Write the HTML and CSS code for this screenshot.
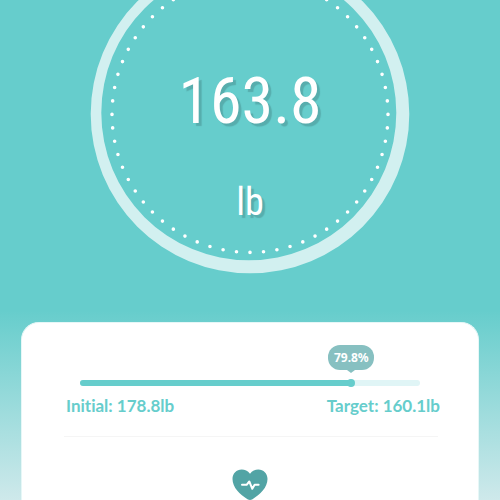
FILE: index.html
```
<!DOCTYPE html>
<html lang="en">
<head>
<meta charset="utf-8">
<meta name="viewport" content="width=device-width, initial-scale=1">
<title>Weight</title>
<link rel="stylesheet" href="styles.css">
</head>
<body>
<main class="page">
  <section class="dial" aria-label="Current weight">
    <svg class="dial-ring" viewBox="0 0 320 320" aria-hidden="true">
      <path fill="#d2f0f0" fill-rule="evenodd" d="M.7 160a159.3 159.3 0 1 0 318.6 0a159.3 159.3 0 1 0-318.6 0zM11.3 158.8a147.5 147.5 0 1 0 295 0a147.5 147.5 0 1 0-295 0z"/>
      <circle cx="160" cy="160.400" r="138" fill="none" stroke="#fff" stroke-width="3.6" stroke-linecap="round" stroke-dasharray="0 1" pathLength="64"/>
    </svg>
    <p class="reading"><span class="value">163.8</span><span class="unit">lb</span></p>
  </section>
  <section class="card">
    <div class="goal">
      <div class="track" role="progressbar" aria-label="Goal progress" aria-valuenow="79.8" aria-valuemin="0" aria-valuemax="100">
        <div class="fill" style="width:79.8%"><span class="bubble">79.8%</span></div>
      </div>
    </div>
    <div class="range"><span>Initial: 178.8lb</span><span>Target: 160.1lb</span></div>
    <hr class="rule">
    <svg class="heart" viewBox="0 0 36 32" aria-hidden="true">
      <path fill="#52a4a5" d="M18 4.8C20.200 1.800 23.200.5 26.300.5C31.500.5 35.500 4.600 35.500 10C35.500 18.500 28 25.500 20.500 30.200Q18 31.700 15.500 30.200C8 25.500.5 18.500.5 10C.5 4.600 4.500.5 9.700.5C12.800.5 15.800 1.800 18 4.800z"/>
      <path fill="none" stroke="#fff" stroke-width="2" stroke-linecap="round" stroke-linejoin="round" d="M10 15.800h4.600l2.700-3.300 3 7.300 2.300-4h4"/>
    </svg>
  </section>
</main>
</body>
</html>
```
FILE: styles.css
```
* { box-sizing: border-box; }

body {
  margin: 0;
  font-family: Lato, "Open Sans", sans-serif;
  font-variant-ligatures: none;
}

.page {
  display: flex;
  flex-direction: column;
  min-height: 100vh;
  overflow: hidden;
  background: linear-gradient(#66cdcc 62%, #cfe9eb 100%);
}

.dial {
  display: grid;
  justify-items: center;
  margin-top: -46px;
  margin-bottom: 48px;
}

.dial-ring,
.reading {
  grid-area: 1 / 1;
}

.dial-ring {
  width: 320px;
  height: 320px;
}

.reading {
  display: flex;
  flex-direction: column;
  align-items: center;
  gap: 44px;
  margin: 112px 0 0;
  color: #fff;
  font-family: "Roboto Condensed", "Liberation Sans Narrow", Roboto, sans-serif;
  text-shadow: 3px 3px 1px #57adad;
}

.value {
  font-size: 64px;
  line-height: 72px;
}

.unit {
  font-size: 38px;
  line-height: 40px;
}

.card {
  flex: 1;
  margin: 0 21px;
  padding: 57px 42px 0;
  border: 1px solid #e6f7f7;
  border-bottom: 0;
  border-radius: 18px 18px 0 0;
  background: #fff;
}

.goal {
  padding: 0 16px;
}

.track {
  height: 6px;
  border-radius: 3px;
  background: #e0f5f6;
}

.fill {
  position: relative;
  height: 100%;
  border-radius: 3px;
  background: #66cdcc;
}

.fill::after {
  content: "";
  position: absolute;
  top: -1px;
  right: -4px;
  width: 8px;
  height: 8px;
  border-radius: 50%;
  background: #66cdcc;
}

.bubble {
  position: absolute;
  right: -23px;
  bottom: 16px;
  width: 46px;
  border-radius: 12px;
  background: #87c0c1;
  color: #fff;
  font-family: "Noto Sans", "Open Sans", sans-serif;
  font-size: 12px;
  font-weight: 700;
  line-height: 25px;
  text-align: center;
}

.bubble::after {
  content: "";
  position: absolute;
  top: 100%;
  left: 50%;
  margin-left: -4px;
  border: 4px solid transparent;
  border-top: 3px solid #87c0c1;
  border-bottom: 0;
}

.range {
  display: flex;
  justify-content: space-between;
  margin: 8px -4px 18px 2px;
  color: #66cdcc;
  font-size: 17px;
  font-weight: 700;
  line-height: 24px;
}

.rule {
  height: 1px;
  margin: 0 -2px 32px 0;
  border: 0;
  background: #f5f5f5;
}

.heart {
  display: block;
  width: 36px;
  height: 32px;
  margin: 0 auto;
}
```
